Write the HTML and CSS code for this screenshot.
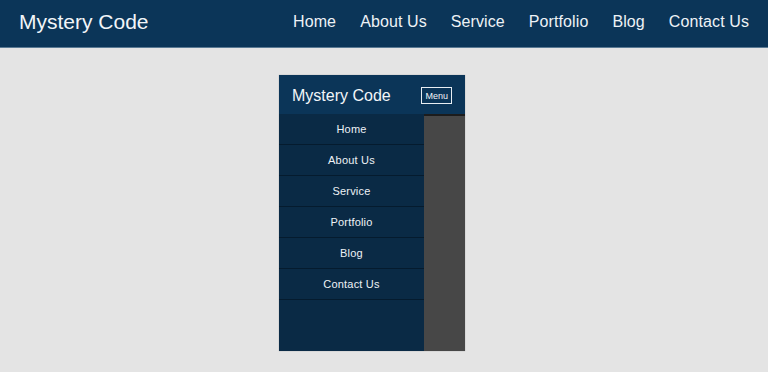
FILE: index.html
```html
<!DOCTYPE html>
<html>
<head>
<meta charset="utf-8">
<link rel="stylesheet" href="styles.css">
</head>
<body>
<header class="site-header">
  <div class="brand">Mystery Code</div>
  <nav class="main-nav">
    <a>Home</a><a>About Us</a><a>Service</a><a>Portfolio</a><a>Blog</a><a>Contact Us</a>
  </nav>
</header>
<main class="stage">
  <div class="phone">
    <div class="phone-header">
      <div class="phone-brand">Mystery Code</div>
      <div class="menu-btn">Menu</div>
    </div>
    <div class="phone-body">
      <ul class="side-menu">
        <li>Home</li>
        <li>About Us</li>
        <li>Service</li>
        <li>Portfolio</li>
        <li>Blog</li>
        <li>Contact Us</li>
      </ul>
      <div class="content-pane"></div>
    </div>
  </div>
</main>
</body>
</html>
```
FILE: styles.css
```css
html, body {
  margin: 0;
  padding: 0;
}
body {
  background: #e4e4e4;
  font-family: "Liberation Sans", Arial, sans-serif;
  color: #fff;
  height: 372px;
  overflow: hidden;
}
.site-header {
  height: 47px;
  background: #0b3558;
  border-bottom: 1px solid #5a7a94;
  display: flex;
  align-items: center;
  justify-content: space-between;
  padding: 0 19px 0 19px;
}
.brand {
  font-size: 21px;
  color: #f2f5f8;
  padding-bottom: 4px;
}
.main-nav {
  display: flex;
  gap: 24px;
  font-size: 16px;
  padding-bottom: 4px;
}
.main-nav a {
  color: #eef2f6;
  letter-spacing: 0.1px;
}
.stage {
  padding: 27px 0 0 279px;
}
.phone {
  width: 186px;
  height: 276px;
  display: flex;
  flex-direction: column;
  box-shadow: 0 0 1px rgba(0,0,0,0.3);
}
.phone-header {
  height: 39px;
  background: #0b3558;
  display: flex;
  align-items: center;
  justify-content: space-between;
  padding: 0 13px;
}
.phone-brand {
  font-size: 16px;
  color: #f2f5f8;
  padding-top: 2px;
}
.menu-btn {
  font-size: 9px;
  border: 1px solid #e8eef3;
  padding: 3px 3px 2px 3px;
  line-height: 10px;
  color: #f2f5f8;
  margin-top: 1px;
}
.phone-body {
  flex: 1;
  display: flex;
}
.side-menu {
  list-style: none;
  margin: 0;
  padding: 0;
  width: 145px;
  background: #0a2a45;
}
.side-menu li {
  height: 30px;
  border-bottom: 1px solid #051b2e;
  display: flex;
  align-items: center;
  justify-content: center;
  font-size: 11px;
  color: #eef2f6;
  letter-spacing: 0.2px;
}
.content-pane {
  flex: 1;
  background: #474747;
  border-top: 2px solid #1c1c1c;
}
```
